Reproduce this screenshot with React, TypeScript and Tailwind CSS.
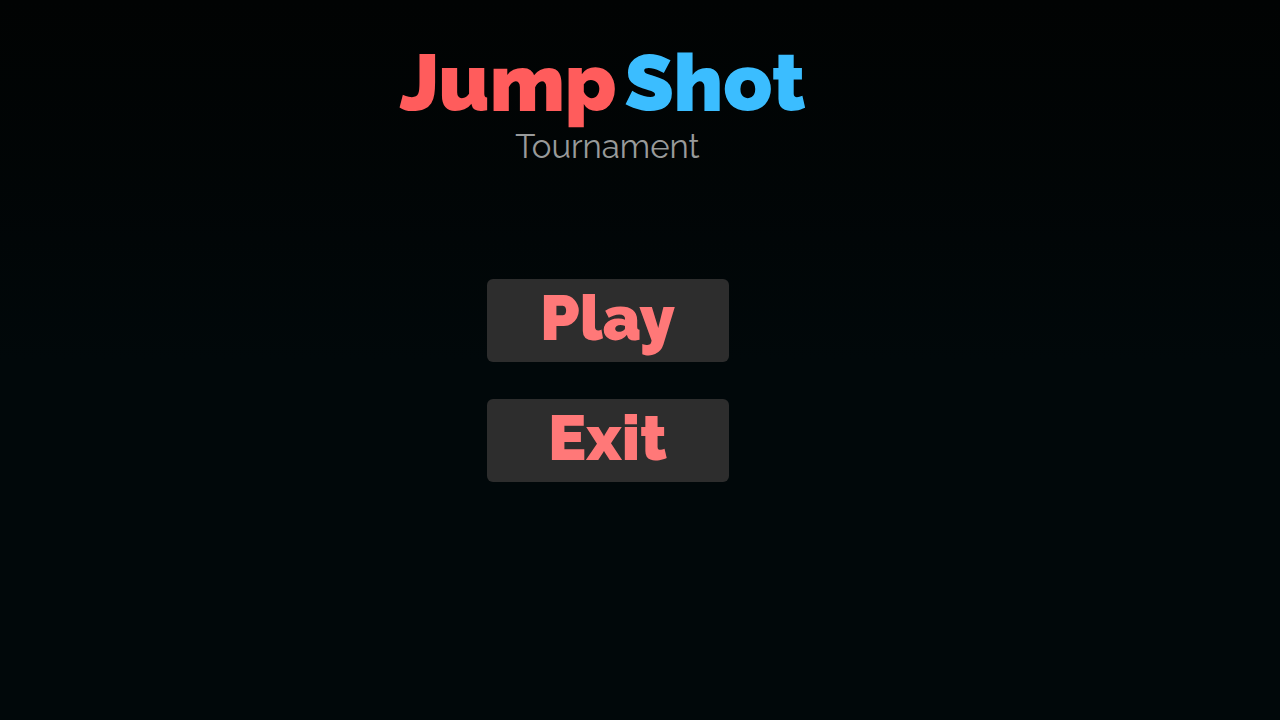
import { useState } from "react";

type MenuItem = {
  id: string;
  label: string;
};

const menuItems: MenuItem[] = [
  { id: "play", label: "Play" },
  { id: "exit", label: "Exit" },
];

export default function App() {
  const [selected, setSelected] = useState<string | null>(null);

  return (
    <main className="flex min-h-screen flex-col items-center bg-gradient-to-b from-[#010303] to-[#01080a] to-50% pt-[35px] pr-[65px] font-['Raleway','Lato',sans-serif]">
      <header className="flex flex-col items-center">
        <h1 className="flex gap-2 pr-2.5 text-[80px] leading-[96px] font-black">
          <span className="text-[#ff5c5c]">Jump</span>
          <span className="text-[#3bbdff]">Shot</span>
        </h1>
        <p className="text-[33px] leading-8 text-[#989a9a]">Tournament</p>
      </header>

      <nav className="mt-[116px] flex flex-col gap-[37px]">
        {menuItems.map((item) => (
          <button
            key={item.id}
            type="button"
            aria-pressed={selected === item.id}
            onClick={() => setSelected(item.id)}
            className="h-[83px] w-[242px] rounded-md bg-[#2d2d2d] pb-1.5 text-[64px] leading-[72px] font-black text-[#ff7878] hover:bg-[#3a3a3a]"
          >
            {item.label}
          </button>
        ))}
      </nav>
    </main>
  );
}
